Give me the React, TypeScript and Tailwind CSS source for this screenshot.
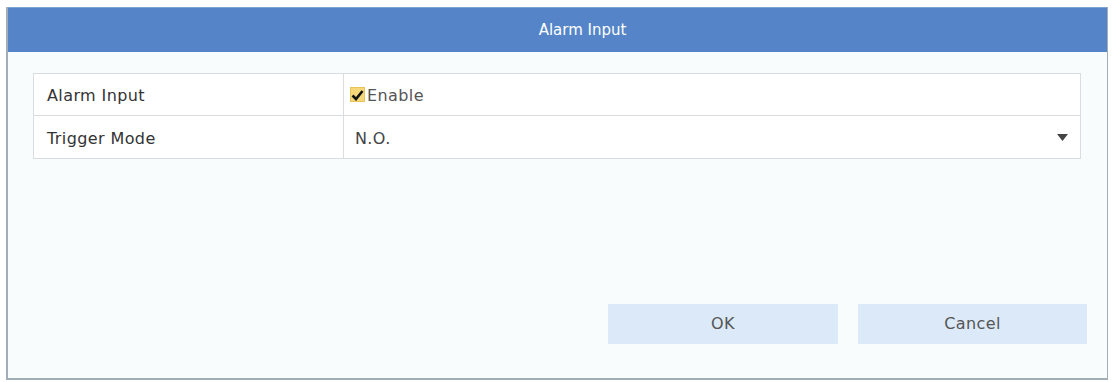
import React, { useState } from 'react';

const App: React.FC = () => {
  const [enabled, setEnabled] = useState(true);
  const [mode, setMode] = useState('N.O.');

  return (
    <div className="w-[1112px] h-[382px] bg-white pt-[7px] pl-[6px] font-['DejaVu_Sans',sans-serif]">
      <div className="w-[1102px] h-[373px] flex flex-col bg-[#f9fcfd] border-l-2 border-b-2 border-r border-[#a3adb5]">
        {/* Header */}
        <div className="h-[45px] shrink-0 bg-[#5585c8] border-t border-[#7fa2d6] flex items-center justify-center pl-[50px] text-white text-[15px]">
          Alarm Input
        </div>

        {/* Content */}
        <div className="flex-1 flex flex-col pt-[21px] pl-[25px] pr-[26px]">
          <div className="border border-[#d9dde0] bg-white text-[16px] tracking-[0.4px]">
            <div className="flex h-[42px] border-b border-[#d9dde0]">
              <div className="w-[310px] shrink-0 border-r border-[#d9dde0] flex items-center pl-[13px] pt-[3px] text-[#333]">
                Alarm Input
              </div>
              <label className="flex-1 flex items-center pl-[6px] text-[#555] cursor-pointer">
                <span
                  onClick={() => setEnabled(!enabled)}
                  className="w-[15px] h-[15px] mr-[2px] bg-[#f5d77a] border border-[#e8c35a] flex items-center justify-center"
                >
                  {enabled && (
                    <svg width="13" height="12" viewBox="0 0 13 12">
                      <path d="M1.5 6.5 L5 10 L11.5 2" stroke="#111" strokeWidth="2.6" fill="none" />
                    </svg>
                  )}
                </span>
                <span className="pt-[3px]">Enable</span>
              </label>
            </div>
            <div className="flex h-[42px]">
              <div className="w-[310px] shrink-0 border-r border-[#d9dde0] flex items-center pl-[13px] pt-[3px] text-[#333]">
                Trigger Mode
              </div>
              <div className="flex-1 flex items-center justify-between pl-[11px] pr-[12px] text-[#444]">
                <span className="pt-[3px]" onClick={() => setMode(mode === 'N.O.' ? 'N.C.' : 'N.O.')}>{mode}</span>
                <svg width="11" height="7" viewBox="0 0 11 7">
                  <path d="M0 0 H11 L5.5 7 Z" fill="#444" />
                </svg>
              </div>
            </div>
          </div>

          <div className="flex-1" />

          <div className="flex justify-end gap-[20px] pb-[34px] -mr-[6px]">
            <button className="w-[230px] h-[40px] bg-[#dbe9f8] text-[#555] text-[16px] tracking-[0.4px]">OK</button>
            <button className="w-[229px] h-[40px] bg-[#dbe9f8] text-[#555] text-[16px] tracking-[0.4px]">Cancel</button>
          </div>
        </div>
      </div>
    </div>
  );
};

export default App;
